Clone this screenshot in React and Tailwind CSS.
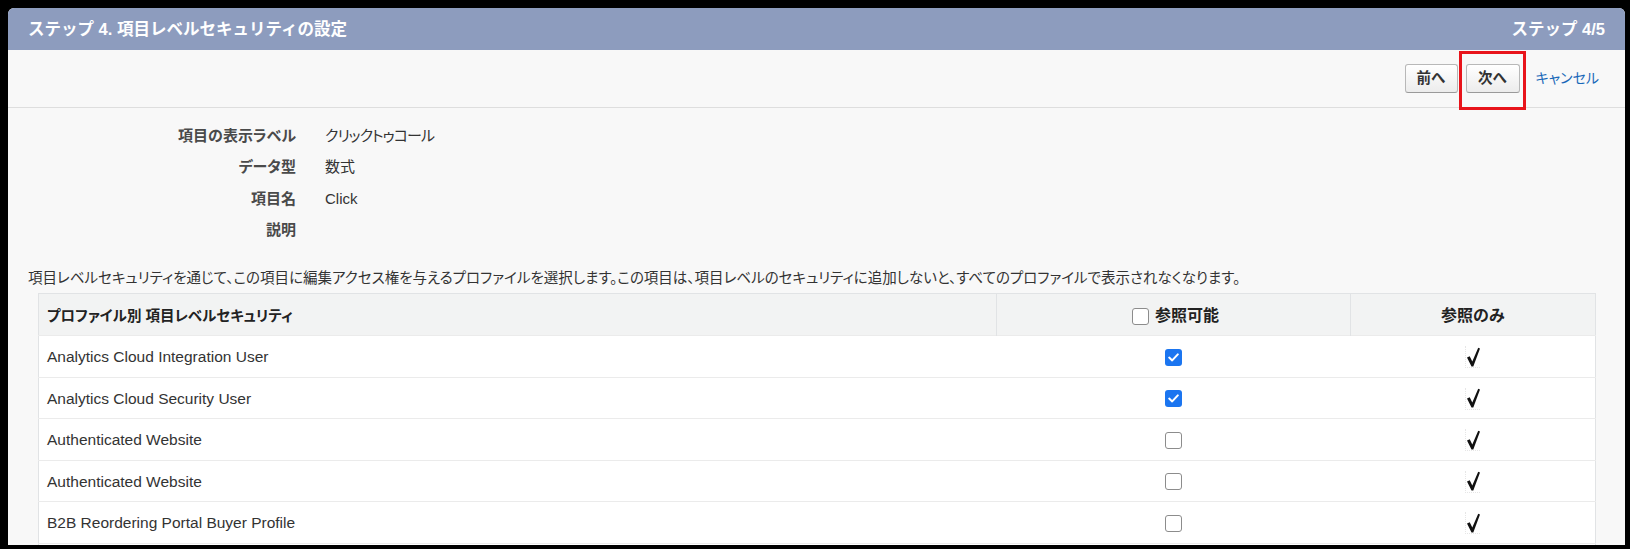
import React from 'react';

const profiles = [
  { name: 'Analytics Cloud Integration User', visible: true },
  { name: 'Analytics Cloud Security User', visible: true },
  { name: 'Authenticated Website', visible: false },
  { name: 'Authenticated Website', visible: false },
  { name: 'B2B Reordering Portal Buyer Profile', visible: false },
];

const details = [
  { label: '項目の表示ラベル', value: 'クリックトゥコール', tight: true },
  { label: 'データ型', value: '数式' },
  { label: '項目名', value: 'Click' },
  { label: '説明', value: '' },
];

const Box = ({ checked }) =>
  checked ? (
    <span className="inline-flex h-[17px] w-[17px] items-center justify-center rounded-[3px] bg-[#1b75f0]">
      <svg width="11" height="9" viewBox="0 0 11 9" fill="none">
        <path d="M1.2 4.6 L4.2 7.4 L9.8 1.4" stroke="#fff" strokeWidth="2" strokeLinecap="round" strokeLinejoin="round" />
      </svg>
    </span>
  ) : (
    <span className="inline-block h-[17px] w-[17px] rounded-[3px] border-[1.5px] border-[#8c8c8c] bg-white" />
  );

// read-only tick, drawn like the old classic checkbox image
const ReadOnlyCheck = () => (
  <span className="inline-flex h-[22px] w-[15px] items-center justify-center border-b border-l border-dotted border-[#e6e6e6]">
    <svg width="13" height="20" viewBox="0 0 13 20">
      <path d="M0 10.6 L2.7 9.3 L5.3 14.4 L11.2 0.8 L13 1.6 L6.3 19.4 L4.5 19.4 Z" fill="#111" />
    </svg>
  </span>
);

const App = () => {
  return (
    <div className="h-[549px] w-[1630px] overflow-hidden bg-black pt-[8px] pl-[8px] pr-[5px] pb-[4px] font-['Liberation_Sans','Noto_Sans_CJK_JP',sans-serif] text-[#333]">
      <div className="flex h-full flex-col overflow-hidden rounded-t-[6px] bg-[#f8f8f8]">
        <div className="flex h-[42px] shrink-0 items-center justify-between bg-[#8d9cbe] pl-[20px] pr-[20px] text-[16.5px] font-bold text-white">
          <span>ステップ 4. 項目レベルセキュリティの設定</span>
          <span>ステップ 4/5</span>
        </div>

        <div className="flex h-[58px] shrink-0 items-center justify-end border-b border-[#dedede] pr-[26px]">
          <button className="h-[29px] w-[53px] rounded-[3px] border border-[#b8b8b8] border-b-[#9a9a9a] bg-[linear-gradient(#ffffff,#ececec)] text-[14.5px] font-bold text-[#333]">
            前へ
          </button>
          <div className="relative ml-[8px]">
            <button className="h-[29px] w-[54px] rounded-[3px] border border-[#b8b8b8] border-b-[#9a9a9a] bg-[linear-gradient(#ffffff,#ececec)] text-[14.5px] font-bold text-[#333]">
              次へ
            </button>
            <span className="pointer-events-none absolute -top-[13px] -bottom-[17px] -left-[7px] -right-[6px] border-[3px] border-[#e8141b]" />
          </div>
          <a href="#" className="ml-[16px] text-[14px] text-[#1868b8] [font-feature-settings:'palt']">
            キャンセル
          </a>
        </div>

        <div className="grid shrink-0 grid-cols-[288px_1fr] gap-x-[29px] pt-[12px] [font-feature-settings:'palt']">
          {details.map((d) => (
            <React.Fragment key={d.label}>
              <div className="flex h-[31.6px] items-center justify-end text-[15px] font-bold text-[#4a4a4a]">{d.label}</div>
              <div className={`flex h-[31.6px] items-center text-[15px] text-[#333] ${d.tight ? 'tracking-[-1px]' : ''}`}>
                {d.value}
              </div>
            </React.Fragment>
          ))}
        </div>

        <p className="mt-[20px] h-[24px] shrink-0 pl-[20px] text-[14.5px] leading-[24px] text-[#333] [font-feature-settings:'palt']">
          項目レベルセキュリティを通じて、この項目に編集アクセス権を与えるプロファイルを選択します。この項目は、項目レベルのセキュリティに追加しないと、すべてのプロファイルで表示されなくなります。
        </p>

        <table className="mt-[3px] ml-[30px] w-[1558px] shrink-0 table-fixed border-collapse border border-[#e1e3e5] bg-white">
          <colgroup>
            <col className="w-[958px]" />
            <col className="w-[354px]" />
            <col />
          </colgroup>
          <thead>
            <tr className="h-[42px] bg-[#f2f3f3]">
              <th className="pl-[8px] pt-[3px] text-left text-[14.5px] font-bold text-[#222] [font-feature-settings:'palt']">
                プロファイル別 項目レベルセキュリティ
              </th>
              <th className="border-l border-[#e1e3e5] pt-[3px] text-[16px] font-bold text-[#222]">
                <span className="inline-flex items-center gap-[6px] pt-[3px] pl-[4px]">
                  <Box checked={false} />
                  参照可能
                </span>
              </th>
              <th className="border-l border-[#e1e3e5] pt-[3px] text-[16px] font-bold text-[#222]">参照のみ</th>
            </tr>
          </thead>
          <tbody>
            {profiles.map((p, i) => (
              <tr key={i} className="h-[41.5px] border-t border-[#ebebeb]">
                <td className="pl-[8px] text-[15.5px] text-[#333]">{p.name}</td>
                <td className="text-center">
                  <span className="inline-flex align-middle">
                    <Box checked={p.visible} />
                  </span>
                </td>
                <td className="text-center">
                  <span className="inline-flex align-middle">
                    <ReadOnlyCheck />
                  </span>
                </td>
              </tr>
            ))}
            <tr className="h-[41.5px] border-t border-[#ebebeb]">
              <td />
              <td />
              <td />
            </tr>
          </tbody>
        </table>
      </div>
    </div>
  );
};

export default App;
